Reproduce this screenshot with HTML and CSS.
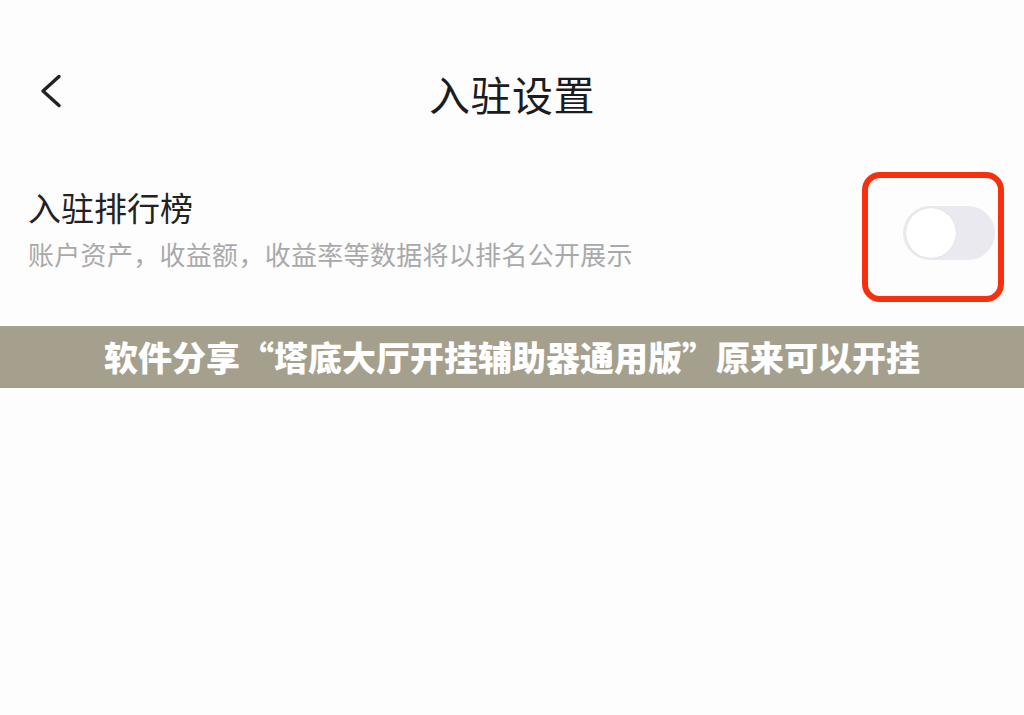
FILE: index.html
```html
<!DOCTYPE html>
<html lang="zh-CN">
<head>
<meta charset="utf-8">
<title>入驻设置</title>
<link rel="stylesheet" href="styles.css">
</head>
<body>
<div class="page">
  <header class="header">
    <svg class="back" width="26" height="36" viewBox="0 0 26 36">
      <path d="M22 2.5 L6 17 L22 31.5" fill="none" stroke="#222" stroke-width="3.4" stroke-linecap="round" stroke-linejoin="round"/>
    </svg>
    <h1 class="title">入驻设置</h1>
  </header>
  <section class="row">
    <div class="text">
      <div class="row-title">入驻排行榜</div>
      <div class="row-sub">账户资产，收益额，收益率等数据将以排名公开展示</div>
    </div>
    <div class="highlight">
      <div class="toggle"><div class="knob"></div></div>
    </div>
  </section>
  <div class="banner">软件分享“塔底大厅开挂辅助器通用版”原来可以开挂</div>
</div>
</body>
</html>
```
FILE: styles.css
```css
html, body {
  margin: 0;
  padding: 0;
  background: #fdfdfd;
}
.page {
  width: 1024px;
  height: 715px;
  font-family: "Noto Sans CJK SC", "Noto Sans", sans-serif;
  overflow: hidden;
}
.header {
  position: relative;
  margin-top: 52px;
  height: 82px;
  display: flex;
  align-items: center;
  justify-content: center;
}
.back {
  position: absolute;
  left: 37px;
  top: 22px;
}
.title {
  margin: 0;
  font-size: 41px;
  font-weight: 400;
  color: #1c1c1e;
  line-height: 82px;
  letter-spacing: 0.5px;
}
.row {
  margin-top: 38px;
  display: flex;
  justify-content: space-between;
  align-items: flex-start;
  padding: 0 20px 0 28px;
}
.text {
  margin-top: 13px;
  display: flex;
  flex-direction: column;
  gap: 7px;
}
.row-title {
  font-size: 33px;
  line-height: 44px;
  color: #222;
}
.row-sub {
  font-size: 26px;
  line-height: 36px;
  color: #a9a9ab;
  letter-spacing: 0.3px;
}
.highlight {
  box-sizing: border-box;
  width: 142px;
  height: 130px;
  border: 6px solid #f5300f;
  border-radius: 18px;
  padding: 28px 3px 0 35px;
  display: flex;
  justify-content: flex-start;
  align-items: flex-start;
}
.toggle {
  width: 92px;
  height: 54px;
  border-radius: 27px;
  background: #e9e9ef;
  display: flex;
  align-items: center;
  padding-left: 3px;
  box-sizing: border-box;
}
.knob {
  width: 50px;
  height: 50px;
  border-radius: 50%;
  background: #fff;
  box-shadow: 0 0 1px rgba(0,0,0,0.15);
}
.banner {
  margin-top: 24px;
  height: 62px;
  background: #a4a08d;
  color: #fff;
  font-size: 34px;
  font-weight: 900;
  line-height: 62px;
  text-align: center;
}
```
